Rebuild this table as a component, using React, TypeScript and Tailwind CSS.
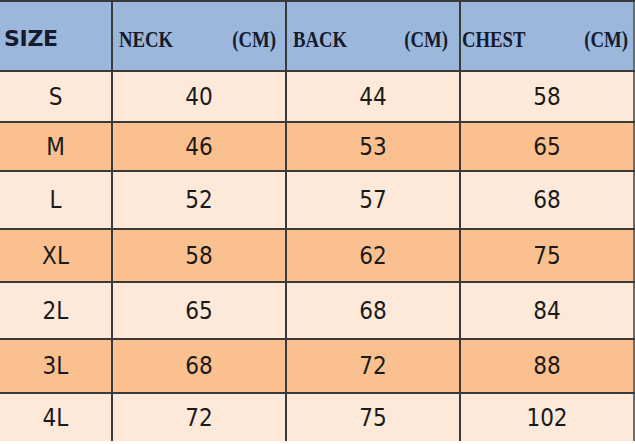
import React from "react";

const rows: { size: string; neck: string; back: string; chest: string; h: string; alt: boolean; last?: boolean }[] = [
  { size: "S", neck: "40", back: "44", chest: "58", h: "h-[51px]", alt: false },
  { size: "M", neck: "46", back: "53", chest: "65", h: "h-[49px]", alt: true },
  { size: "L", neck: "52", back: "57", chest: "68", h: "h-[58px]", alt: false },
  { size: "XL", neck: "58", back: "62", chest: "75", h: "h-[53px]", alt: true },
  { size: "2L", neck: "65", back: "68", chest: "84", h: "h-[57px]", alt: false },
  { size: "3L", neck: "68", back: "72", chest: "88", h: "h-[54px]", alt: true },
  { size: "4L", neck: "72", back: "75", chest: "102", h: "h-[47px]", alt: false, last: true },
];

const serif = { fontFamily: '"Liberation Serif", "Times New Roman", serif' };

function Head({ label, cls }: { label: string; cls: string }) {
  return (
    <div className={`flex items-center justify-between border-l-2 border-l-[#3a3a3a] pt-[5px] text-[24px] font-bold ${cls}`} style={serif}>
      <span className="inline-block origin-left scale-x-[0.78]">{label}</span>
      <span className="inline-block origin-right scale-x-[0.78]">(CM)</span>
    </div>
  );
}

export default function App() {
  return (
    <div className="w-[635px] h-[444px] bg-white overflow-hidden">
      <div className="border-t-2 border-[#3a3a3a]">
        <div className="grid grid-cols-[111px_174px_174px_176px] h-[70px] border-b-2 border-[#3a3a3a] bg-[#9bb7dc] text-[#151a2c]">
          <div className="flex items-center pl-[4px] pt-[5px]">
            <span className="text-[22px] font-bold tracking-[-0.3px]" style={{ fontFamily: '"DejaVu Sans", Verdana, sans-serif' }}>
              SIZE
            </span>
          </div>
          <Head label="NECK" cls="pl-[6px] pr-[9px]" />
          <Head label="BACK" cls="pl-[6px] pr-[11px]" />
          <Head label="CHEST" cls="pl-[1px] pr-[5px] border-r-2 border-r-[#6b6b6b]" />
        </div>
        {rows.map((r) => (
          <div
            key={r.size}
            className={`grid grid-cols-[111px_174px_174px_176px] ${r.h} ${r.last ? "" : "border-b-2 border-[#3a3a3a]"} ${r.alt ? "bg-[#fac08f]" : "bg-[#fde9d9]"} text-[#1a1a1a] text-[24px]`}
            style={{ fontFamily: '"DejaVu Sans Condensed", "Open Sans", sans-serif' }}
          >
            <div className="flex items-center justify-center">{r.size}</div>
            <div className="flex items-center justify-center border-l-2 border-[#3a3a3a]">{r.neck}</div>
            <div className="flex items-center justify-center border-l-2 border-[#3a3a3a]">{r.back}</div>
            <div className="flex items-center justify-center border-l-2 border-r-2 border-l-[#3a3a3a] border-r-[#6b6b6b]">{r.chest}</div>
          </div>
        ))}
      </div>
    </div>
  );
}
